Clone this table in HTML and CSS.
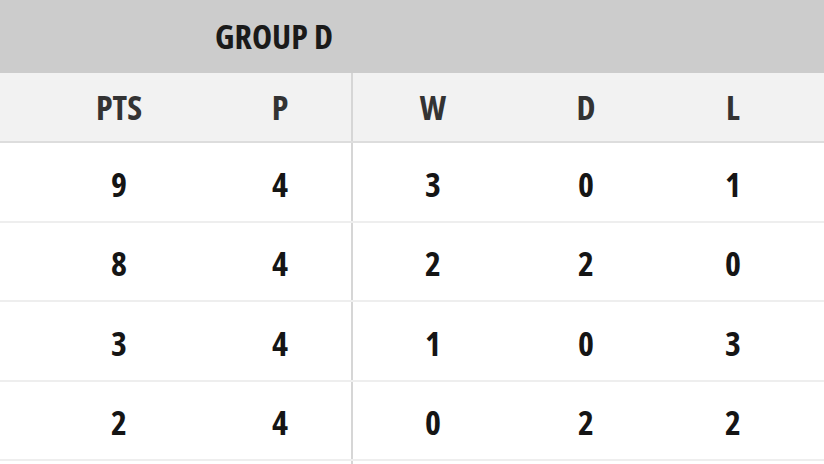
FILE: index.html
```html
<!DOCTYPE html>
<html>
<head>
<meta charset="utf-8">
<link rel="stylesheet" href="styles.css">
</head>
<body>
<div class="table">
  <div class="group-row">
    <div class="group-title">GROUP D</div>
  </div>
  <div class="row head">
    <div class="cell"></div>
    <div class="cell">PTS</div>
    <div class="cell">P</div>
    <div class="cell div">W</div>
    <div class="cell">D</div>
    <div class="cell">L</div>
    <div class="cell"></div>
  </div>
  <div class="row">
    <div class="cell"></div>
    <div class="cell">9</div>
    <div class="cell">4</div>
    <div class="cell div">3</div>
    <div class="cell">0</div>
    <div class="cell">1</div>
    <div class="cell"></div>
  </div>
  <div class="row">
    <div class="cell"></div>
    <div class="cell">8</div>
    <div class="cell">4</div>
    <div class="cell div">2</div>
    <div class="cell">2</div>
    <div class="cell">0</div>
    <div class="cell"></div>
  </div>
  <div class="row">
    <div class="cell"></div>
    <div class="cell">3</div>
    <div class="cell">4</div>
    <div class="cell div">1</div>
    <div class="cell">0</div>
    <div class="cell">3</div>
    <div class="cell"></div>
  </div>
  <div class="row">
    <div class="cell"></div>
    <div class="cell">2</div>
    <div class="cell">4</div>
    <div class="cell div">0</div>
    <div class="cell">2</div>
    <div class="cell">2</div>
    <div class="cell"></div>
  </div>
  <div class="row filler">
    <div class="cell"></div>
    <div class="cell"></div>
    <div class="cell"></div>
    <div class="cell div"></div>
    <div class="cell"></div>
    <div class="cell"></div>
    <div class="cell"></div>
  </div>
</div>
</body>
</html>
```
FILE: styles.css
```css
html, body {
  margin: 0;
  padding: 0;
  background: #ffffff;
}
body {
  width: 824px;
  height: 464px;
  overflow: hidden;
  font-family: "Open Sans", "DejaVu Sans", sans-serif;
  font-weight: 700;
  font-stretch: 75%;
}
.table {
  display: flex;
  flex-direction: column;
}
.group-row {
  display: grid;
  grid-template-columns: 31px 176px 146px 160px 146px 148px 17px;
  height: 73px;
  background: #cccccc;
  align-items: center;
}
.group-title {
  grid-column: 2 / 5;
  text-align: center;
  padding-left: 4px;
  font-size: 34px;
  color: #1a1a1a;
  line-height: 1;
  margin-top: -2px;
}
.row {
  display: grid;
  grid-template-columns: 31px 176px 146px 160px 146px 148px 17px;
  height: 79.5px;
  box-sizing: border-box;
  border-bottom: 2px solid #eeeeee;
  background: #ffffff;
}
.row.head {
  height: 70px;
  background: #f2f2f2;
  border-bottom: 2px solid #dddddd;
}
.row.filler {
  height: 12px;
  border-bottom: none;
}
.cell {
  display: flex;
  align-items: center;
  justify-content: center;
  font-size: 34px;
  line-height: 1;
  color: #151515;
  padding-top: 4px;
}
.head .cell {
  color: #333333;
  padding-top: 0;
}
.cell.div {
  border-left: 2px solid #d6d6d6;
  margin-left: -2px;
}
```
